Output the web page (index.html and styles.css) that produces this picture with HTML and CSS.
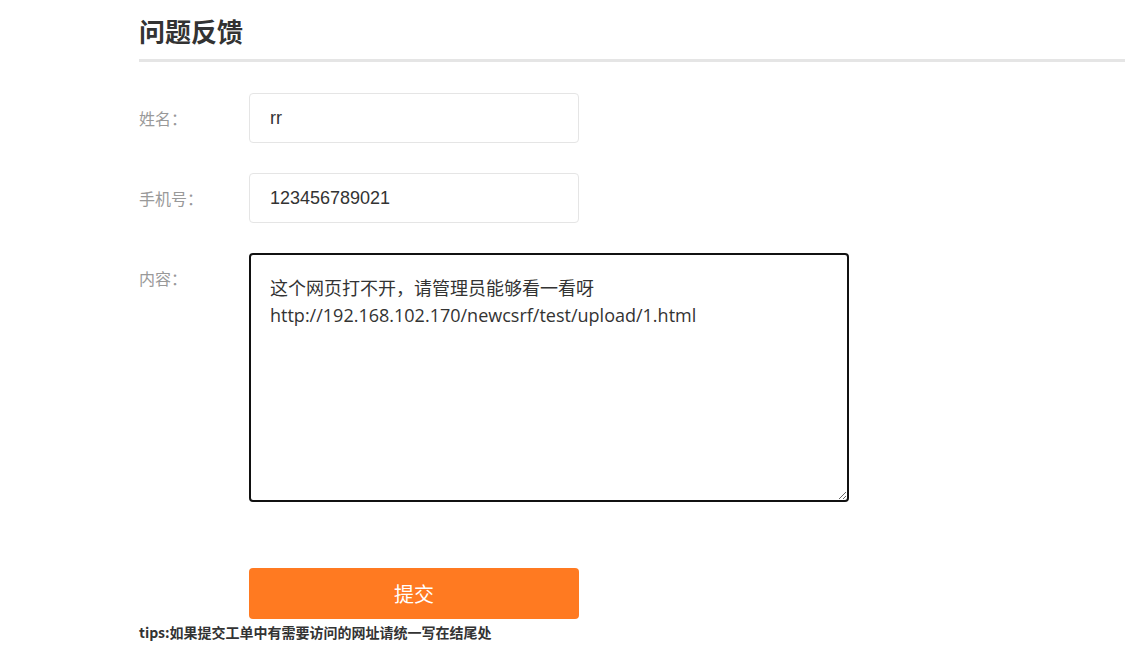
FILE: index.html
```html
<!DOCTYPE html>
<html>
<head>
 <meta charset="utf-8">
 <title>问题反馈</title>
 <link rel="stylesheet" href="styles.css">
</head>
<body>
 <div class="page">
 <h1 class="title">问题反馈</h1>
 <form class="feedback">
 <div class="row">
 <label class="label" for="name">姓名：</label>
 <input class="field" type="text" id="name" value="rr">
 </div>
 <div class="row">
 <label class="label" for="phone">手机号：</label>
 <input class="field" type="text" id="phone" value="123456789021">
 </div>
 <div class="row">
 <label class="label" for="content">内容：</label>
 <textarea class="area" id="content">这个网页打不开，请管理员能够看一看呀
http://192.168.102.170/newcsrf/test/upload/1.html</textarea>
 </div>
 <div class="row row-btn">
 <span class="label"></span>
 <button class="submit" type="button">提交</button>
 </div>
 <p class="tips">tips:如果提交工单中有需要访问的网址请统一写在结尾处</p>
 </form>
 </div>
</body>
</html>
```

FILE: styles.css
```css
/* Style général */
body {
 margin: 0;
 background: #fff;
 font-family: "Liberation Sans", "Noto Sans CJK SC", sans-serif;
 color: #333;
}
.page {
 padding-left: 139px;
}
/* Titre */
.title {
 margin: 0;
 padding-top: 14px;
 padding-bottom: 11px;
 font-size: 26px;
 line-height: 34px;
 font-weight: bold;
 color: #333;
 font-family: "Noto Sans CJK SC", sans-serif;
 border-bottom: 3px solid #e5e5e5;
}
/* Formulaire */
.feedback {
 padding-top: 31px;
}
.row {
 display: flex;
 align-items: flex-start;
 margin-bottom: 30px;
}
.label {
 width: 110px;
 flex: none;
 font-size: 16px;
 line-height: 50px;
 color: #999;
 font-family: "Noto Sans CJK SC", sans-serif;
}
.field {
 box-sizing: border-box;
 width: 330px;
 height: 50px;
 padding: 0 20px;
 border: 1px solid #e5e5e5;
 border-radius: 4px;
 font-family: "Liberation Sans", "Noto Sans CJK SC", sans-serif;
 font-size: 18px;
 color: #333;
 outline: none;
}
.area {
 box-sizing: border-box;
 width: 600px;
 height: 249px;
 padding: 20px 20px 20px 19px;
 border: 2px solid #111;
 border-radius: 4px;
 font-family: "Open Sans", "Noto Sans CJK SC", sans-serif;
 font-size: 18px;
 line-height: 27px;
 color: #333;
 outline: none;
}
.row-btn {
 margin-top: 66px;
 margin-bottom: 0;
}
.submit {
 width: 330px;
 height: 51px;
 border: none;
 border-radius: 4px;
 background: #ff7a21;
 color: #fff;
 font-size: 20px;
 font-family: "Noto Sans CJK SC", sans-serif;
 cursor: pointer;
}
/* Astuce */
.tips {
 margin: 3px 0 0;
 font-size: 14px;
 line-height: 20px;
 font-weight: bold;
 color: #333;
 font-family: "Noto Sans CJK SC", sans-serif;
}
```
